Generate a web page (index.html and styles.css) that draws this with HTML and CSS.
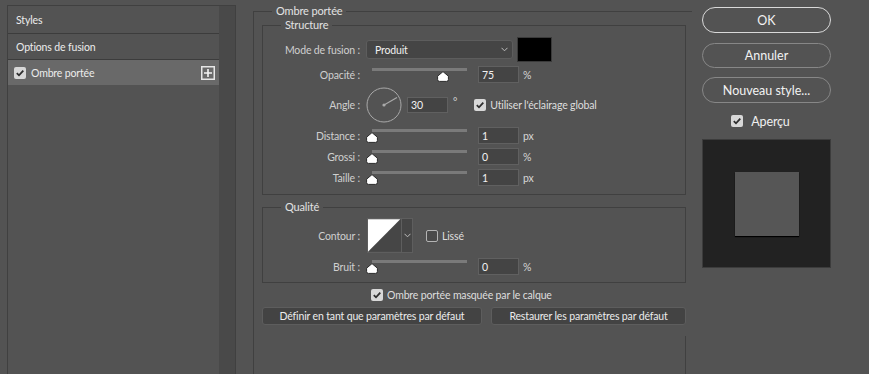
FILE: index.html
```html
<!DOCTYPE html>
<html lang="fr">
<head>
    <meta charset="UTF-8">
    <meta name="viewport" content="width=device-width, initial-scale=1.0">
    <title>Style de calque</title>
    <link rel="stylesheet" href="styles.css">
</head>
<body>
<div class="dialog">
    <aside class="sidebar">
        <ul class="style-list">
            <li class="style-item first">Styles</li>
            <li class="style-item">Options de fusion</li>
            <li class="style-item selected">
                <span class="check on"><svg width="12" height="12" viewBox="0 0 12 12"><path d="M2.8 6.1 L5 8.3 L9.3 3.7" /></svg></span>
                <span class="item-name">Ombre portée</span>
                <span class="add-btn"><svg width="14" height="14" viewBox="0 0 14 14"><rect x="0.75" y="0.75" width="12.5" height="12.5" /><path d="M7 3 V11 M3 7 H11" /></svg></span>
            </li>
        </ul>
        <div class="sidebar-scroll"></div>
    </aside>

    <main class="panel">
        <fieldset class="group outer">
            <legend>Ombre portée</legend>

            <fieldset class="group structure">
                <legend>Structure</legend>
                <div class="rows">
                    <div class="row row-mode">
                        <span class="lbl">Mode de fusion :</span>
                        <div class="select">
                            <span>Produit</span>
                            <svg width="7" height="5" viewBox="0 0 7 5"><path d="M0.5 0.8 L3.5 3.8 L6.5 0.8" /></svg>
                        </div>
                        <div class="swatch"></div>
                    </div>

                    <div class="row">
                        <span class="lbl">Opacité :</span>
                        <div class="slider">
                            <div class="track"></div>
                            <svg class="thumb" style="--v: 75%" width="12" height="11" viewBox="0 0 12 11"><path d="M6 0.6 L11.4 5.2 V8.6 Q11.4 10.4 9.6 10.4 H2.4 Q0.6 10.4 0.6 8.6 V5.2 Z" /></svg>
                        </div>
                        <div class="field">75</div>
                        <span class="unit">%</span>
                    </div>

                    <div class="row row-angle">
                        <span class="lbl">Angle :</span>
                        <svg class="dial" width="36" height="36" viewBox="0 0 36 36">
                            <circle cx="18" cy="18" r="17" />
                            <path d="M18 18 L31 10.5" />
                            <circle class="dot" cx="18" cy="18" r="1.6" />
                        </svg>
                        <div class="field">30</div>
                        <span class="deg">°</span>
                        <span class="check on"><svg width="12" height="12" viewBox="0 0 12 12"><path d="M2.8 6.1 L5 8.3 L9.3 3.7" /></svg></span>
                        <span class="check-label">Utiliser l'éclairage global</span>
                    </div>

                    <div class="row">
                        <span class="lbl">Distance :</span>
                        <div class="slider">
                            <div class="track"></div>
                            <svg class="thumb" style="--v: 0%" width="12" height="11" viewBox="0 0 12 11"><path d="M6 0.6 L11.4 5.2 V8.6 Q11.4 10.4 9.6 10.4 H2.4 Q0.6 10.4 0.6 8.6 V5.2 Z" /></svg>
                        </div>
                        <div class="field">1</div>
                        <span class="unit">px</span>
                    </div>

                    <div class="row">
                        <span class="lbl">Grossi :</span>
                        <div class="slider">
                            <div class="track"></div>
                            <svg class="thumb" style="--v: 0%" width="12" height="11" viewBox="0 0 12 11"><path d="M6 0.6 L11.4 5.2 V8.6 Q11.4 10.4 9.6 10.4 H2.4 Q0.6 10.4 0.6 8.6 V5.2 Z" /></svg>
                        </div>
                        <div class="field">0</div>
                        <span class="unit">%</span>
                    </div>

                    <div class="row">
                        <span class="lbl">Taille :</span>
                        <div class="slider">
                            <div class="track"></div>
                            <svg class="thumb" style="--v: 0%" width="12" height="11" viewBox="0 0 12 11"><path d="M6 0.6 L11.4 5.2 V8.6 Q11.4 10.4 9.6 10.4 H2.4 Q0.6 10.4 0.6 8.6 V5.2 Z" /></svg>
                        </div>
                        <div class="field">1</div>
                        <span class="unit">px</span>
                    </div>
                </div>
            </fieldset>

            <fieldset class="group quality">
                <legend>Qualité</legend>
                <div class="rows">
                    <div class="row row-contour">
                        <span class="lbl">Contour :</span>
                        <div class="contour">
                            <svg class="curve" width="34" height="33" viewBox="0 0 34 33">
                                <rect width="34" height="33" fill="#464646" />
                                <polygon points="0,0 33,0 0,33" fill="#ffffff" />
                            </svg>
                            <div class="contour-drop">
                                <svg width="7" height="5" viewBox="0 0 7 5"><path d="M0.5 0.8 L3.5 3.8 L6.5 0.8" /></svg>
                            </div>
                        </div>
                        <span class="check off"></span>
                        <span class="check-label">Lissé</span>
                    </div>

                    <div class="row">
                        <span class="lbl">Bruit :</span>
                        <div class="slider">
                            <div class="track"></div>
                            <svg class="thumb" style="--v: 0%" width="12" height="11" viewBox="0 0 12 11"><path d="M6 0.6 L11.4 5.2 V8.6 Q11.4 10.4 9.6 10.4 H2.4 Q0.6 10.4 0.6 8.6 V5.2 Z" /></svg>
                        </div>
                        <div class="field">0</div>
                        <span class="unit">%</span>
                    </div>
                </div>
            </fieldset>

            <div class="knockout">
                <span class="check on"><svg width="12" height="12" viewBox="0 0 12 12"><path d="M2.8 6.1 L5 8.3 L9.3 3.7" /></svg></span>
                <span class="check-label">Ombre portée masquée par le calque</span>
            </div>

            <div class="defaults">
                <button class="flat-btn btn-set">Définir en tant que paramètres par défaut</button>
                <button class="flat-btn btn-reset">Restaurer les paramètres par défaut</button>
            </div>

            <div class="tail"></div>
        </fieldset>
    </main>

    <div class="actions">
        <button class="pill-btn primary">OK</button>
        <button class="pill-btn cancel">Annuler</button>
        <button class="pill-btn new-style">Nouveau style...</button>
        <div class="preview-toggle">
            <span class="check on"><svg width="12" height="12" viewBox="0 0 12 12"><path d="M2.8 6.1 L5 8.3 L9.3 3.7" /></svg></span>
            <span class="check-label">Aperçu</span>
        </div>
        <div class="preview">
            <div class="preview-square"></div>
        </div>
    </div>
</div>
</body>
</html>
```

FILE: styles.css
```css
* {
    box-sizing: border-box;
}

body {
    margin: 0;
    height: 374px;
    overflow: hidden;
    background-color: #535353;
    font-family: Lato, "Noto Sans", sans-serif;
    font-size: 10.5px;
    letter-spacing: -0.15px;
    color: #d2d2d2;
}

.dialog {
    display: flex;
    align-items: flex-start;
    height: 374px;
}

/* left list of effects */
.sidebar {
    display: flex;
    margin: 5px 0 0 7px;
    height: 369px;
    border: 1px solid #404040;
    border-bottom: none;
}

.style-list {
    list-style: none;
    margin: 0;
    padding: 0;
    width: 211px;
}

.style-item {
    display: flex;
    align-items: center;
    box-sizing: content-box;
    height: 25px;
    padding-left: 8px;
    border-bottom: 1px solid #3c3c3c;
    color: #ececec;
}

.style-item.first {
    height: 27px;
}

.style-item.selected {
    padding-left: 6px;
    border-bottom: none;
    background-color: #696969;
}

.style-item .item-name {
    margin-left: 5px;
}

.add-btn {
    display: flex;
    margin-left: auto;
    margin-right: 4px;
}

.add-btn rect {
    fill: none;
    stroke: #e6e6e6;
    stroke-width: 1.5;
}

.add-btn path {
    stroke: #f4f4f4;
    stroke-width: 1.6;
}

.sidebar-scroll {
    width: 16px;
    background-color: #494949;
}

/* main settings */
.panel {
    margin-left: 17px;
    width: 439px;
}

.group {
    margin: 0;
    min-width: 0;
    border: 1px solid #404040;
}

.group legend {
    padding: 0 4px;
    margin-left: 18px;
    line-height: 14px;
    font-size: 11px;
    color: #e2e2e2;
}

.outer {
    margin-top: 4px;
    padding: 0 6px 0 8px;
    border-right: none;
    border-bottom: none;
}

.outer > legend {
    margin-left: 10px;
}

.structure {
    padding: 5px 0 8px 0;
}

.quality {
    margin-top: 5px;
    padding: 4px 0 7px 0;
}

.rows {
    display: flex;
    flex-direction: column;
    gap: 4px;
}

.quality .rows {
    gap: 5px;
}

.row {
    display: flex;
    align-items: center;
    height: 17px;
}

.row-mode {
    height: 25px;
}

.row-angle {
    height: 36px;
}

.row-contour {
    height: 35px;
}

.lbl {
    width: 97px;
    text-align: right;
    color: #cfcfcf;
}

.select {
    display: flex;
    align-items: center;
    justify-content: space-between;
    width: 147px;
    height: 19px;
    margin-left: 6px;
    padding: 0 4px 0 8px;
    border: 1px solid #5d5d5d;
    border-radius: 3px;
    background-color: #454545;
    color: #f0f0f0;
}

.select path,
.contour-drop path {
    fill: none;
    stroke: #bdbdbd;
    stroke-width: 1;
}

.swatch {
    width: 35px;
    height: 25px;
    margin-left: 4px;
    border: 1px solid #3a3a3a;
    background-color: #000000;
}

.slider {
    display: flex;
    flex-direction: column;
    width: 95px;
    height: 17px;
    margin-left: 12px;
    margin-right: 11px;
    padding-top: 2px;
}

.track {
    height: 3px;
    background-color: #7a7a7a;
}

.thumb {
    display: block;
    margin-top: 0;
    margin-left: calc(var(--v) - 6px);
}

.thumb path {
    fill: #ffffff;
    stroke: #2a2a2a;
    stroke-width: 1;
}

.field {
    display: flex;
    align-items: center;
    width: 41px;
    height: 17px;
    padding-left: 3px;
    border: 1px solid #606060;
    background-color: #444444;
    color: #f2f2f2;
}

.row-angle .field {
    height: 16px;
    margin-left: 5px;
}

.unit {
    margin-left: 4px;
    color: #d6d6d6;
}

.dial {
    margin-left: 6px;
}

.dial circle {
    fill: none;
    stroke: #a9a9a9;
    stroke-width: 1;
}

.dial path {
    stroke: #a9a9a9;
    stroke-width: 1.2;
}

.dial .dot {
    fill: #a9a9a9;
    stroke: none;
}

.deg {
    margin-left: 5px;
    margin-top: -6px;
    color: #d6d6d6;
}

.check {
    display: inline-flex;
    flex: 0 0 auto;
    width: 12px;
    height: 12px;
    border-radius: 2px;
}

.check.on {
    background-color: #d8d8d8;
}

.check.on path {
    fill: none;
    stroke: #2e2e2e;
    stroke-width: 1.8;
}

.check.off {
    border: 1px solid #b4b4b4;
    background-color: #4a4a4a;
}

.check-label {
    margin-left: 4px;
    color: #dedede;
}

.row-angle .check {
    margin-left: 17px;
}

.contour {
    display: flex;
    width: 46px;
    height: 35px;
    margin-left: 7px;
    border: 1px solid #5e5e5e;
}

.curve {
    display: block;
}

.contour-drop {
    display: flex;
    align-items: center;
    justify-content: center;
    width: 11px;
    border-left: 1px solid #5e5e5e;
    background-color: #464646;
}

.row-contour .check {
    margin-left: 13px;
}

.knockout {
    display: flex;
    align-items: center;
    height: 14px;
    margin-top: 5px;
    padding-left: 109px;
}

.defaults {
    display: flex;
    gap: 9px;
    margin-top: 5px;
}

.flat-btn {
    height: 18px;
    padding: 0;
    border: 1px solid #5d5d5d;
    border-radius: 3px;
    background-color: #434343;
    color: #ececec;
    font-family: inherit;
    font-size: 10.5px;
    letter-spacing: -0.15px;
}

.btn-set {
    flex: 0 0 220px;
}

.btn-reset {
    flex: 1;
}

.tail {
    height: 40px;
    margin-top: 11px;
    border-right: 1px solid #404040;
}

/* right column */
.actions {
    display: flex;
    flex-direction: column;
    width: 129px;
    margin-top: 7px;
    margin-left: 10px;
}

.pill-btn {
    height: 26px;
    padding: 0;
    border: 1px solid #878787;
    border-radius: 13px;
    background-color: transparent;
    color: #f2f2f2;
    font-family: inherit;
    font-size: 12.5px;
}

.pill-btn.primary {
    border: 1.5px solid #d9d9d9;
}

.pill-btn.cancel {
    height: 25px;
    margin-top: 10px;
}

.pill-btn.new-style {
    margin-top: 9px;
}

.preview-toggle {
    display: flex;
    align-items: center;
    justify-content: center;
    height: 16px;
    margin-top: 10px;
    padding-right: 12px;
    font-size: 12.5px;
}

.preview-toggle .check-label {
    margin-left: 8px;
    color: #f0f0f0;
}

.preview {
    display: flex;
    align-items: center;
    justify-content: center;
    width: 129px;
    height: 129px;
    margin-top: 10px;
    border: 1px solid #3c3c3c;
    background-color: #222222;
}

.preview-square {
    width: 64px;
    height: 64px;
    background-color: #565656;
    box-shadow: 0 1px 1px #000000;
}
```
